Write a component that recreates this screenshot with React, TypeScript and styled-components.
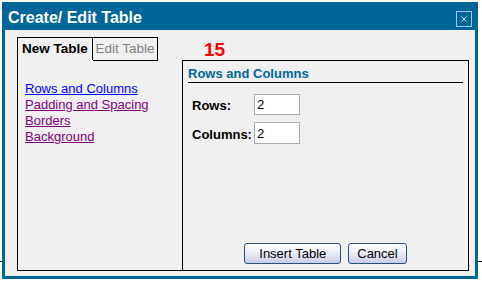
import React from 'react';
import styled, { createGlobalStyle, css } from 'styled-components';

const GlobalStyle = createGlobalStyle`
  html, body {
    margin: 0;
    padding: 0;
    background: #fff;
  }
  body {
    font-family: 'Liberation Sans', Arial, sans-serif;
    font-size: 13px;
  }
`;

const blue = '#006699';

const Page = styled.div`
  position: relative;
  width: 482px;
  height: 285px;
  overflow: hidden;
`;

const PageRule = styled.div`
  margin-top: 261px;
  height: 1px;
  background: #000;
`;

const Dialog = styled.div`
  position: absolute;
  left: 2px;
  top: 2px;
  width: 476px;
  height: 277px;
  box-sizing: border-box;
  border: 3px solid ${blue};
  background: #f0f0f0;
  display: flex;
  flex-direction: column;
`;

const TitleBar = styled.div`
  height: 25px;
  background: ${blue};
  display: flex;
  align-items: center;
  justify-content: space-between;
  padding: 0 3px;
`;

const Title = styled.h1`
  margin: 0;
  color: #fff;
  font-size: 16px;
  font-weight: bold;
  line-height: 25px;
`;

const CloseBox = styled.button`
  width: 16px;
  height: 16px;
  margin-top: 3px;
  padding: 0;
  box-sizing: border-box;
  border: 1px solid #9ccaf0;
  background: transparent;
  display: flex;
  align-items: center;
  justify-content: center;
`;

const Body = styled.div`
  flex: 1;
  display: flex;
  flex-direction: column;
  padding: 7px 6px 5px 12px;
`;

const TopRow = styled.div`
  height: 23px;
  display: flex;
  align-items: flex-start;
`;

const Tab = styled.div<{ $active?: boolean; $width: number }>`
  box-sizing: border-box;
  width: ${p => p.$width}px;
  border: 1px solid #000;
  line-height: 22px;
  font-size: 13.5px;
  white-space: nowrap;
  text-align: center;
  ${p =>
    p.$active
      ? css`
          height: 23px;
          border-bottom: none;
          font-weight: bold;
          color: #000;
        `
      : css`
          height: 24px;
          border-left: none;
          color: #808080;
        `}
`;

const Marker = styled.span`
  margin-left: 46px;
  margin-top: 3px;
  color: #ff0000;
  font-size: 19px;
  font-weight: bold;
  line-height: 20px;
`;

const Panes = styled.div`
  flex: 1;
  display: flex;
`;

const SidePane = styled.nav`
  width: 165px;
  box-sizing: border-box;
  border-left: 1px solid #000;
  border-bottom: 1px solid #000;
  padding: 21px 0 0 7px;
  display: flex;
  flex-direction: column;
`;

const SideLink = styled.a<{ $visited?: boolean }>`
  color: ${p => (p.$visited ? '#800080' : '#0000ff')};
  text-decoration: underline;
  font-size: 13px;
  line-height: 16px;
  align-self: flex-start;
`;

const MainPane = styled.section`
  flex: 1;
  box-sizing: border-box;
  border: 1px solid #000;
  display: flex;
  flex-direction: column;
  padding: 5px 5px 6px 5px;
`;

const Heading = styled.h2`
  margin: 0;
  color: ${blue};
  font-size: 13px;
  font-weight: bold;
  line-height: 16px;
  border-bottom: 1px solid #000;
`;

const Form = styled.div`
  display: grid;
  grid-template-columns: 62px 46px;
  row-gap: 7px;
  margin: 11px 0 0 4px;
  align-items: center;
`;

const Label = styled.label`
  font-weight: bold;
  font-size: 13px;
  color: #000;
  padding-top: 2px;
`;

const Field = styled.input<{ $tall?: boolean }>`
  width: 46px;
  height: ${p => (p.$tall ? 22 : 21)}px;
  box-sizing: border-box;
  border: 1px solid #a5acb2;
  background: #fff;
  padding: 0 2px;
  font-family: 'Liberation Sans', Arial, sans-serif;
  font-size: 13px;
  color: #000;
  outline: none;
`;

const Actions = styled.div`
  margin-top: auto;
  display: flex;
  justify-content: center;
  gap: 7px;
`;

const Button = styled.button<{ $pad: number }>`
  height: 21px;
  box-sizing: border-box;
  padding: 0 ${p => p.$pad}px;
  border: 1px solid #24507e;
  border-radius: 3px;
  background: linear-gradient(to bottom, #ffffff 0%, #f3f4fa 35%, #d6d9ee 80%, #c7cbe6 100%);
  font-family: 'Liberation Sans', Arial, sans-serif;
  font-size: 13px;
  color: #000;
  line-height: 19px;
`;

export default function App() {
  return (
    <Page>
      <GlobalStyle />
      <PageRule />
      <Dialog>
        <TitleBar>
          <Title>Create/ Edit Table</Title>
          <CloseBox aria-label="Close">
            <svg width="6" height="6" viewBox="0 0 6 6">
              <path d="M0.5 0.5 L5.5 5.5 M5.5 0.5 L0.5 5.5" stroke="#c4e0f8" strokeWidth="1" />
            </svg>
          </CloseBox>
        </TitleBar>
        <Body>
          <TopRow>
            <Tab $active $width={76}>New Table</Tab>
            <Tab $width={65}>Edit Table</Tab>
            <Marker>15</Marker>
          </TopRow>
          <Panes>
            <SidePane>
              <SideLink href="#rows">Rows and Columns</SideLink>
              <SideLink href="#padding" $visited>Padding and Spacing</SideLink>
              <SideLink href="#borders" $visited>Borders</SideLink>
              <SideLink href="#background" $visited>Background</SideLink>
            </SidePane>
            <MainPane>
              <Heading>Rows and Columns</Heading>
              <Form>
                <Label>Rows:</Label>
                <Field defaultValue="2" />
                <Label>Columns:</Label>
                <Field defaultValue="2" $tall />
              </Form>
              <Actions>
                <Button $pad={14}>Insert Table</Button>
                <Button $pad={8}>Cancel</Button>
              </Actions>
            </MainPane>
          </Panes>
        </Body>
      </Dialog>
    </Page>
  );
}
